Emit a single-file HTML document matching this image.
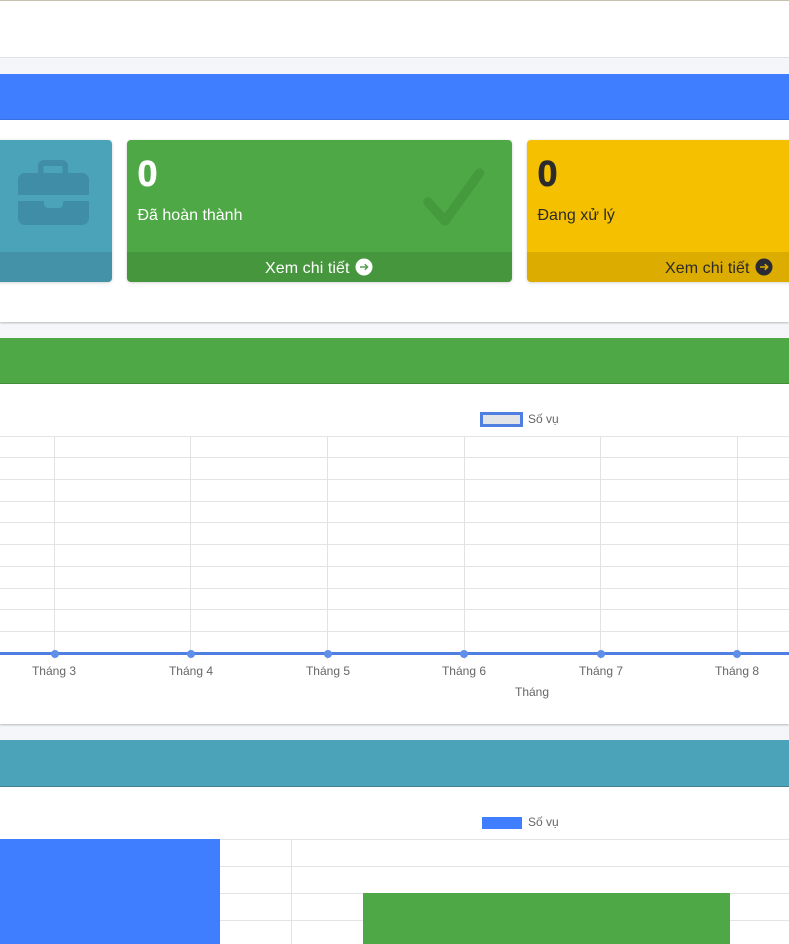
<!DOCTYPE html>
<html lang="vi">
<head>
<meta charset="utf-8">
<title>Dashboard</title>
<style>
html,body{margin:0;padding:0;width:789px;height:944px;overflow:hidden;background:#f4f6f9;font-family:"Liberation Sans",sans-serif}
#p{position:relative;width:789px;height:944px;overflow:hidden}
.a{position:absolute}
.num{position:absolute;font-weight:700;font-size:36px;line-height:40px;left:10.500px;top:14px;-webkit-text-stroke:.6px currentColor}
.lbl{position:absolute;font-size:16px;line-height:20px;left:10.500px;top:65.500px}
.foot{position:absolute;left:0;right:0;bottom:0;height:30px;background:rgba(0,0,0,.1)}
.card{position:absolute;top:140px;height:142px;border-radius:4px;box-shadow:0 0 1px rgba(0,0,0,.13),0 1px 3px rgba(0,0,0,.15);overflow:hidden}
.more{position:absolute;font-size:16px;line-height:20px;top:118.500px;white-space:nowrap;letter-spacing:.08px}
.h{position:absolute;left:0;width:789px;height:1px;background:#e4e4e4}
.v{position:absolute;width:1px;background:#e2e2e2}
.t{position:absolute;font-size:12px;line-height:14px;color:#666;white-space:nowrap;transform:translateX(-50%)}
.dot{position:absolute;top:649.500px;width:8px;height:8px;border-radius:50%;background:#5f8fe8;margin-left:-4px}
</style>
</head>
<body>
<div id="p">
  <div class="a" style="left:0;top:0;width:789px;height:1px;background:#c9bfae"></div>
  <div class="a" style="left:0;top:1px;width:789px;height:56px;background:#fff;border-bottom:1px solid #dee2e6"></div>

  <div class="a" style="left:0;top:74px;width:789px;height:45px;background:#3f7fff;border-bottom:1px solid #3a74e6"></div>
  <div class="a" style="left:0;top:120px;width:789px;height:202px;background:#fff;box-shadow:0 1px 2px rgba(0,0,0,.25)"></div>

  <div class="card" style="left:-200px;width:312px;background:#4ba3ba">
    <div class="foot"></div>
    <svg class="a" style="left:218px;top:20px" width="71" height="65" viewBox="0 0 71 65">
      <g fill="#3f8da6">
        <path fill-rule="evenodd" d="M20 13V6a6 6 0 0 1 6-6h18a6 6 0 0 1 6 6v7h-5.500V6.500a.5.5 0 0 0-.5-.5H26a.5.5 0 0 0-.5.5V13z"/>
        <path d="M7 13h57a7 7 0 0 1 7 7v15H0V20a7 7 0 0 1 7-7z"/>
        <path d="M0 41h26v3a4 4 0 0 0 4 4h11a4 4 0 0 0 4-4v-3h26v17a7 7 0 0 1-7 7H7a7 7 0 0 1-7-7z"/>
      </g>
    </svg>
  </div>

  <div class="card" style="left:127px;width:385px;background:#4ea845;color:#fff">
    <div class="num">0</div>
    <div class="lbl">Đã hoàn thành</div>
    <svg class="a" style="left:290px;top:22px" width="70" height="70" viewBox="0 0 70 70">
      <path d="M11 40 L28 59 L62.500 11" fill="none" stroke="#449a3d" stroke-width="9.500" stroke-linecap="round" stroke-linejoin="round"/>
    </svg>
    <div class="foot"></div>
    <div class="more" style="left:138px">Xem chi tiết</div>
    <svg class="a" style="left:228px;top:118px" width="18" height="18" viewBox="0 0 18 18">
      <circle cx="9" cy="9" r="8.500" fill="#fff"/>
      <path d="M5 9H12.500M9.800 6.200L12.600 9L9.800 11.800" fill="none" stroke="#5a9f55" stroke-width="1.500"/>
    </svg>
  </div>

  <div class="card" style="left:527px;width:300px;background:#f5c000;color:#2b2b2b">
    <div class="num">0</div>
    <div class="lbl">Đang xử lý</div>
    <div class="foot"></div>
    <div class="more" style="left:138px">Xem chi tiết</div>
    <svg class="a" style="left:228px;top:118px" width="18" height="18" viewBox="0 0 18 18">
      <circle cx="9" cy="9" r="8.500" fill="#2a2b33"/>
      <path d="M5 9H12.500M9.800 6.200L12.600 9L9.800 11.800" fill="none" stroke="#dcad02" stroke-width="1.600"/>
    </svg>
  </div>

  <!-- line chart panel -->
  <div class="a" style="left:0;top:338px;width:789px;height:45px;background:#4ea845;border-bottom:1px solid #438f3c"></div>
  <div class="a" style="left:0;top:384px;width:789px;height:340px;background:#fff;box-shadow:0 1px 2px rgba(0,0,0,.25)"></div>

  <div class="a" style="left:480px;top:412px;width:37px;height:9px;background:#e2e4e8;border:3px solid #4f80e1"></div>
  <div class="a" style="left:528px;top:412px;font-size:12px;line-height:15px;color:#666">Số vụ</div>

  <div class="h" style="top:436px"></div><div class="h" style="top:457px"></div>
  <div class="h" style="top:479px"></div><div class="h" style="top:501px"></div>
  <div class="h" style="top:522px"></div><div class="h" style="top:544px"></div>
  <div class="h" style="top:566px"></div><div class="h" style="top:588px"></div>
  <div class="h" style="top:609px"></div><div class="h" style="top:631px"></div>

  <div class="v" style="left:54px;top:436px;height:223px"></div>
  <div class="v" style="left:190px;top:436px;height:223px"></div>
  <div class="v" style="left:327px;top:436px;height:223px"></div>
  <div class="v" style="left:464px;top:436px;height:223px"></div>
  <div class="v" style="left:600px;top:436px;height:223px"></div>
  <div class="v" style="left:737px;top:436px;height:223px"></div>

  <div class="a" style="left:0;top:652px;width:789px;height:3px;background:#4f80e1"></div>
  <div class="dot" style="left:54.500px"></div><div class="dot" style="left:190.500px"></div>
  <div class="dot" style="left:327.500px"></div><div class="dot" style="left:464px"></div>
  <div class="dot" style="left:600.500px"></div><div class="dot" style="left:737px"></div>

  <div class="t" style="left:54px;top:664px">Tháng 3</div>
  <div class="t" style="left:191px;top:664px">Tháng 4</div>
  <div class="t" style="left:328px;top:664px">Tháng 5</div>
  <div class="t" style="left:464px;top:664px">Tháng 6</div>
  <div class="t" style="left:601px;top:664px">Tháng 7</div>
  <div class="t" style="left:737px;top:664px">Tháng 8</div>
  <div class="t" style="left:532px;top:685px">Tháng</div>

  <!-- bar chart panel -->
  <div class="a" style="left:0;top:740px;width:789px;height:46px;background:#4ba3ba;border-bottom:1px solid #42808f"></div>
  <div class="a" style="left:0;top:787px;width:789px;height:157px;background:#fff"></div>

  <div class="a" style="left:481.500px;top:817px;width:40px;height:12px;background:#3f7fff"></div>
  <div class="a" style="left:528px;top:815px;font-size:12px;line-height:15px;color:#666">Số vụ</div>

  <div class="h" style="top:839px"></div><div class="h" style="top:866px"></div>
  <div class="h" style="top:893px"></div><div class="h" style="top:920px"></div>
  <div class="v" style="left:291px;top:839px;height:105px"></div>

  <div class="a" style="left:0;top:839px;width:220px;height:105px;background:#3f7fff"></div>
  <div class="a" style="left:363px;top:893px;width:367px;height:51px;background:#4ea845"></div>
</div>
</body>
</html>
